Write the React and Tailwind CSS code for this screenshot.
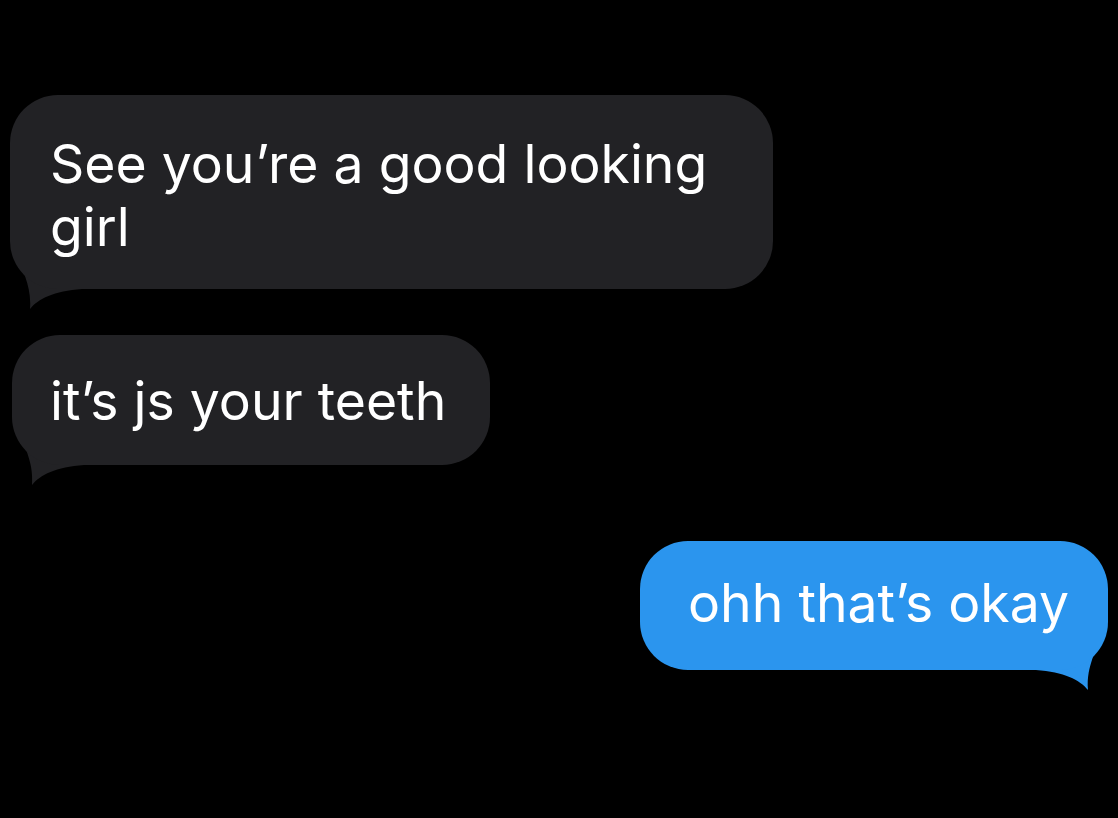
import React from 'react';

const font = { fontFamily: 'Inter, "Liberation Sans", sans-serif' };

// hook growing out of the bubble's lower corner; drawn for the left side, mirrored for the right
const Tail = ({ color, side }) => (
  <svg
    viewBox="0 0 72 66"
    className={`absolute bottom-[-20px] w-[72px] h-[66px] ${side === 'right' ? 'right-0 -scale-x-100' : 'left-0'}`}
  >
    <path d="M8 6 C10 28 22 40 20 66 C28 56 44 48 72 46 L72 6 Z" fill={color} />
  </svg>
);

const Bubble = ({ children, className, color, side }) => (
  <div className={`relative ${className}`}>
    <Tail color={color} side={side} />
    <div
      className="relative rounded-[48px] text-white text-[53.5px] leading-[63px]"
      style={{ backgroundColor: color, ...font }}
    >
      {children}
    </div>
  </div>
);

export default function App() {
  return (
    <div className="w-[1118px] h-[818px] bg-black overflow-hidden flex flex-col pt-[95px] px-[10px]">
      <Bubble className="w-[763px]" color="#222225" side="left">
        <div className="pl-[40px] pt-[37px] pb-[32px] h-[194px]">
          See you’re a good looking
          <br />
          girl
        </div>
      </Bubble>

      <Bubble className="w-[478px] mt-[46px] ml-[2px]" color="#222225" side="left">
        <div className="pl-[38px] h-[130px] flex items-center">it’s js your teeth</div>
      </Bubble>

      <Bubble className="w-[468px] mt-[76px] self-end" color="#2b95ee" side="right">
        <div className="pl-[48px] h-[129px] flex items-center pb-[6px]">ohh that’s okay</div>
      </Bubble>
    </div>
  );
}
